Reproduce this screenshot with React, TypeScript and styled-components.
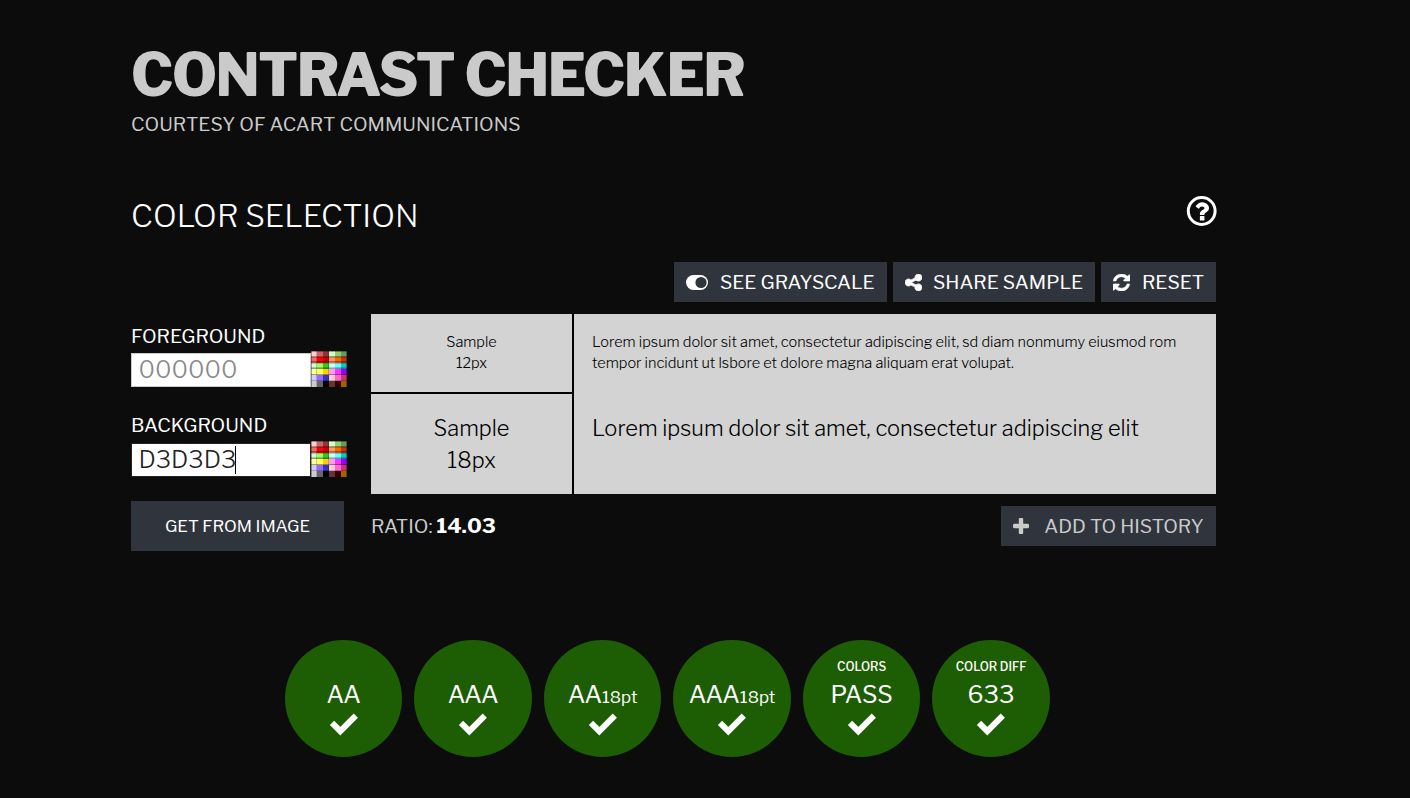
import React from 'react';
import styled, { createGlobalStyle } from 'styled-components';

const GlobalStyle = createGlobalStyle`
  * { box-sizing: border-box; }
  body {
    margin: 0;
    background: #0c0c0c;
    color: #fff;
    font-family: 'Libre Franklin', Inter, 'Liberation Sans', sans-serif;
    font-size: 19.2px;
    overflow: hidden;
  }
`;

const Page = styled.div`
  width: 1085px;
  height: 798px;
  margin-left: 131px;
  display: flex;
  flex-direction: column;
`;

const Header = styled.header`
  height: 190px;
  padding-top: 41px;
  text-transform: uppercase;
  color: #cacaca;
`;

const Title = styled.h1`
  margin: 0;
  font-size: 58.1px;
  font-weight: 800;
  line-height: 69px;
  letter-spacing: -1.55px;
  white-space: nowrap;
`;

const Subtitle = styled.p`
  margin: 0;
  line-height: 28px;
`;

const SectionHead = styled.div`
  height: 72px;
  display: flex;
  justify-content: space-between;
`;

const SectionTitle = styled.h2`
  margin: 6px 0 0;
  font-size: 31.2px;
  font-weight: 300;
  line-height: 40px;
  text-transform: uppercase;
`;

const HelpButton = styled.button`
  width: 32px;
  height: 32px;
  margin: 5px -2px 0 0;
  padding: 0;
  border: 0;
  background: none;
  color: #fff;
`;

const Toolbar = styled.div`
  height: 52px;
  display: flex;
  justify-content: flex-end;
  gap: 6px;
`;

const ActionButton = styled.button<{ $width: number; $muted?: boolean; $gap: number }>`
  width: ${(p) => p.$width}px;
  height: 40px;
  padding: 0 0 0 12px;
  border: 0;
  display: flex;
  align-items: center;
  gap: ${(p) => p.$gap}px;
  background: #30353d;
  color: ${(p) => (p.$muted ? '#cacaca' : '#fff')};
  font: inherit;
  text-transform: uppercase;
  white-space: nowrap;
`;

const Workspace = styled.div`
  height: 326px;
  display: grid;
  grid-template-columns: 216px 845px;
  column-gap: 24px;
`;

const Field = styled.div`
  height: 90px;
  padding-top: 8px;
`;

const FieldLabel = styled.label<{ $lineHeight: number }>`
  display: block;
  height: 28px;
  line-height: ${(p) => p.$lineHeight}px;
  text-transform: uppercase;
`;

const FieldRow = styled.div`
  display: flex;
  height: 38px;
  align-items: center;
`;

const HexBox = styled.div<{ $active?: boolean }>`
  width: 180px;
  height: 34px;
  margin-top: 2px;
  padding: 0 0 2px 6.5px;
  border: 1px solid ${(p) => (p.$active ? '#222' : '#cacaca')};
  display: flex;
  align-items: center;
  background: #fff;
  color: ${(p) => (p.$active ? '#222' : '#8a8a8a')};
  font-size: 24.2px;
  font-weight: 300;
`;

const Caret = styled.span`
  width: 1px;
  height: 28px;
  margin: 1px 0 0 -1.5px;
  background: #000;
`;

const ImageButton = styled.button`
  width: 213px;
  height: 50px;
  margin-top: 7px;
  padding: 0;
  border: 0;
  background: #30353d;
  color: #fff;
  font: inherit;
  font-size: 16.8px;
  text-transform: uppercase;
`;

const Samples = styled.div`
  height: 180px;
  display: grid;
  grid-template-columns: 201px 642px;
  grid-template-rows: 78px 100px;
  gap: 2px;
  background: #000;
`;

const SampleLabel = styled.div<{ $large?: boolean }>`
  padding-top: 18px;
  background: #d3d3d3;
  color: #000;
  font-size: ${(p) => (p.$large ? 21.8 : 14.53)}px;
  font-weight: 300;
  line-height: ${(p) => (p.$large ? 32 : 21)}px;
  text-align: center;
`;

const SampleText = styled(SampleLabel)`
  padding-left: 18px;
  text-align: left;
  white-space: nowrap;
  ${(p) => !p.$large && 'box-shadow: 0 2px 0 #d3d3d3;'}
`;

const ResultRow = styled.div`
  margin-top: 12px;
  display: flex;
  justify-content: space-between;
`;

const Ratio = styled.div`
  color: #cacaca;
  line-height: 40px;

  strong {
    margin-left: 4px;
    color: #fff;
    font-size: 21px;
    font-weight: 700;
  }
`;

const Badges = styled.div`
  margin-left: 154px;
  display: flex;
  gap: 12.2px;
`;

const Badge = styled.div`
  width: 117.3px;
  height: 117px;
  padding-top: 18px;
  border-radius: 50%;
  display: flex;
  flex-direction: column;
  align-items: center;
  background: #1d5d03;
`;

const BadgeCaption = styled.div`
  height: 20px;
  font-size: 11.9px;
  font-weight: 500;
  line-height: 18px;
  text-transform: uppercase;
`;

const BadgeValue = styled.div`
  height: 34px;
  font-size: 24.2px;
  line-height: 34px;

  small {
    font-size: 16.9px;
  }
`;

const HelpIcon = () => (
  <svg width="32" height="32" viewBox="0 0 32 32" fill="currentColor">
    <circle cx="15.7" cy="16" r="13.4" fill="none" stroke="currentColor" strokeWidth="3" />
    <path transform="translate(2.9 3.6) scale(0.0143)" d="M1088 1256v240q0 16-12 28t-28 12h-240q-16 0-28-12t-12-28v-240q0-16 12-28t28-12h240q16 0 28 12t12 28zm316-600q0 54-15.5 101t-35 76.5-55 59.5-57.5 43.5-61 35.5q-41 23-68.5 65t-27.5 67q0 17-12 32.5t-28 15.5h-240q-15 0-25.5-18.5t-10.5-37.5v-45q0-83 65-156.5t143-108.5q59-27 84-56t25-76q0-42-46.5-74t-107.5-32q-65 0-108 29-35 25-107 115-13 16-31 16-12 0-25-8l-164-125q-13-10-15.5-25t5.5-28q160-266 464-266 80 0 161 31t146 83 106 127.5 41 158.5z" />
  </svg>
);

const ToggleIcon = () => (
  <svg width="22" height="15" viewBox="0 0 22 15">
    <rect width="22" height="15" rx="7.5" fill="currentColor" />
    <circle cx="15" cy="7.5" r="5.6" fill="#30353d" />
  </svg>
);

const ShareIcon = () => (
  <svg width="17" height="17" viewBox="128 128 1536 1536" fill="currentColor">
    <path stroke="currentColor" strokeWidth="60" d="M1344 1024q133 0 226.5 93.5t93.5 226.5-93.5 226.5-226.5 93.5-226.5-93.5-93.5-226.5q0-12 2-34l-360-180q-92 86-218 86-133 0-226.5-93.5t-93.5-226.5 93.5-226.5 226.5-93.5q126 0 218 86l360-180q-2-22-2-34 0-133 93.5-226.5t226.5-93.5 226.5 93.5 93.5 226.5-93.5 226.5-226.5 93.5q-126 0-218-86l-360 180q2 22 2 34t-2 34l360 180q92-86 218-86z" />
  </svg>
);

const RefreshIcon = () => (
  <svg width="17" height="17" viewBox="128 128 1536 1536" fill="currentColor">
    <path stroke="currentColor" strokeWidth="50" d="M1639 1056q0 5-1 7-64 268-268 434.5t-478 166.5q-146 0-282.5-55t-243.5-157l-129 129q-19 19-45 19t-45-19-19-45v-448q0-26 19-45t45-19h448q26 0 45 19t19 45-19 45l-137 137q71 66 161 102t187 36q134 0 250-65t186-179q11-17 53-117 8-23 30-23h192q13 0 22.5 9.5t9.5 22.5zm25-800v448q0 26-19 45t-45 19h-448q-26 0-45-19t-19-45 19-45l138-138q-148-137-349-137-134 0-250 65t-186 179q-11 17-53 117-8 23-30 23h-199q-13 0-22.5-9.5t-9.5-22.5v-7q65-268 270-434.5t480-166.5q146 0 284 55.5t245 156.5l130-129q19-19 45-19t45 19 19 45z" />
  </svg>
);

const PlusIcon = () => (
  <svg width="16" height="16" viewBox="192 128 1408 1408" fill="currentColor">
    <path d="M1600 736v192q0 40-28 68t-68 28h-416v416q0 40-28 68t-68 28h-192q-40 0-68-28t-28-68v-416h-416q-40 0-68-28t-28-68v-192q0-40 28-68t68-28h416v-416q0-40 28-68t68-28h192q40 0 68 28t28 68v416h416q40 0 68 28t28 68z" />
  </svg>
);

const CheckIcon = () => (
  <svg width="30" height="24" viewBox="0 0 30 24">
    <path d="M3 10.8 L11.3 19.2 L26.8 3.6" fill="none" stroke="#fff" strokeWidth="6" />
  </svg>
);

const SWATCHES = [
  ['#ffcccc', '#cc6666', '#993333', '#ccffcc', '#99cc66', '#669966'],
  ['#ff6666', '#ff0000', '#cc0000', '#ff9966', '#ff6600', '#cc3300'],
  ['#ccffcc', '#99ff66', '#33cc00', '#ccffff', '#66ffff', '#00cccc'],
  ['#ffff99', '#ffff66', '#ffcc00', '#ff99ff', '#ff33ff', '#9900ff'],
  ['#ccccff', '#9966ff', '#3333cc', '#ffcccc', '#ff66cc', '#cc3366'],
  ['#cccccc', '#666666', '#000000', '#663333', '#330000', '#996600'],
];

const PaletteIcon = () => (
  <svg width="36" height="36" viewBox="0 0 36 36">
    {SWATCHES.map((row, y) =>
      row.map((color, x) => <rect key={`${x}-${y}`} x={x * 6} y={y * 6} width="6" height="6" fill={color} />),
    )}
    <path d="M0 .5h36M0 5.5h36M0 10.5h36M0 17.5h36M0 23.5h36M.5 0v36M35.5 0v36" stroke="#000" strokeOpacity="0.35" fill="none" />
    <path d="M0 6.5h36M0 11.5h36M0 12.5h36M0 16.5h36M0 29.5h36M5.5 0v36M17.5 0v36" stroke="#000" strokeOpacity="0.2" fill="none" />
  </svg>
);

const RESULTS = [
  { value: 'AA' },
  { value: 'AAA' },
  { value: 'AA', size: '18pt' },
  { value: 'AAA', size: '18pt' },
  { caption: 'Colors', value: 'PASS' },
  { caption: 'Color diff', value: '633' },
];

export default function App() {
  return (
    <>
      <GlobalStyle />
      <Page>
        <Header>
          <Title>Contrast Checker</Title>
          <Subtitle>Courtesy of Acart Communications</Subtitle>
        </Header>
        <SectionHead>
          <SectionTitle>Color Selection</SectionTitle>
          <HelpButton aria-label="Help"><HelpIcon /></HelpButton>
        </SectionHead>
        <Toolbar>
          <ActionButton $width={213} $gap={12}><ToggleIcon />See Grayscale</ActionButton>
          <ActionButton $width={202} $gap={11}><ShareIcon />Share Sample</ActionButton>
          <ActionButton $width={115} $gap={12}><RefreshIcon />Reset</ActionButton>
        </Toolbar>
        <Workspace>
          <div>
            <Field>
              <FieldLabel $lineHeight={29}>Foreground</FieldLabel>
              <FieldRow><HexBox>000000</HexBox><PaletteIcon /></FieldRow>
            </Field>
            <Field>
              <FieldLabel $lineHeight={27}>Background</FieldLabel>
              <FieldRow><HexBox $active>D3D3D3<Caret /></HexBox><PaletteIcon /></FieldRow>
            </Field>
            <ImageButton>Get from image</ImageButton>
          </div>
          <div>
            <Samples>
              <SampleLabel>Sample<br />12px</SampleLabel>
              <SampleText>
                Lorem ipsum dolor sit amet, consectetur adipiscing elit, sd diam nonmumy eiusmod rom<br />
                tempor incidunt ut lsbore et dolore magna aliquam erat volupat.
              </SampleText>
              <SampleLabel $large>Sample<br />18px</SampleLabel>
              <SampleText $large>Lorem ipsum dolor sit amet, consectetur adipiscing elit</SampleText>
            </Samples>
            <ResultRow>
              <Ratio>RATIO:<strong>14.03</strong></Ratio>
              <ActionButton $width={215} $gap={15.3} $muted><PlusIcon />Add to history</ActionButton>
            </ResultRow>
          </div>
        </Workspace>
        <Badges>
          {RESULTS.map((r, i) => (
            <Badge key={i}>
              <BadgeCaption>{r.caption}</BadgeCaption>
              <BadgeValue>{r.value}{r.size && <small>{r.size}</small>}</BadgeValue>
              <CheckIcon />
            </Badge>
          ))}
        </Badges>
      </Page>
    </>
  );
}
